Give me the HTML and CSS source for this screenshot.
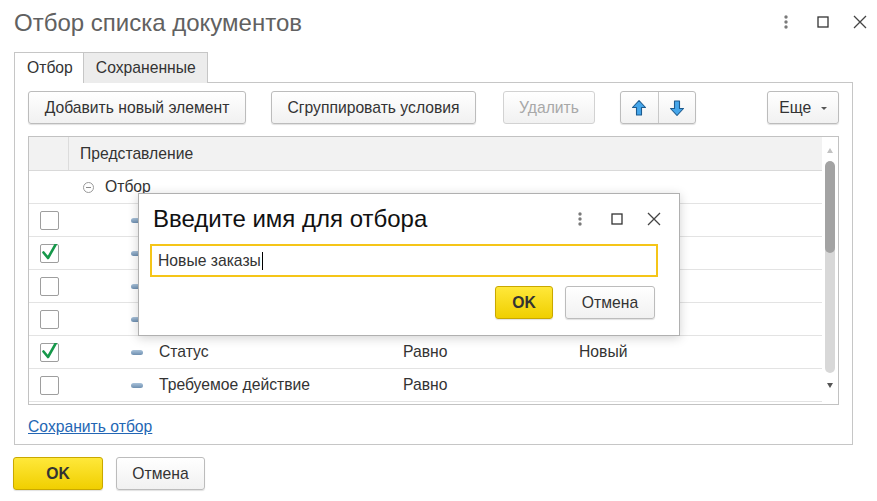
FILE: index.html
```html
<!DOCTYPE html>
<html lang="ru">
<head>
<meta charset="utf-8">
<title>Отбор списка документов</title>
<link rel="stylesheet" href="styles.css">
</head>
<body>
<div class="window">
  <div class="titlebar">
    <div class="title">Отбор списка документов</div>
    <div class="win-icons">
      <svg class="ico" width="16" height="16" viewBox="0 0 16 16"><circle cx="8" cy="3" r="1.7" fill="#7a7a7a"/><circle cx="8" cy="8" r="1.7" fill="#7a7a7a"/><circle cx="8" cy="13" r="1.7" fill="#7a7a7a"/></svg>
      <svg class="ico" width="16" height="16" viewBox="0 0 16 16"><rect x="3" y="3" width="10" height="10" fill="none" stroke="#333" stroke-width="1.3"/></svg>
      <svg class="ico" width="16" height="16" viewBox="0 0 16 16"><path d="M2 2 L14 14 M14 2 L2 14" stroke="#444" stroke-width="1.3" fill="none"/></svg>
    </div>
  </div>

  <div class="tabs">
    <div class="tab active">Отбор</div>
    <div class="tab">Сохраненные</div>
  </div>

  <div class="panel">
    <div class="toolbar">
      <button class="btn btn-add">Добавить новый элемент</button>
      <button class="btn btn-group">Сгруппировать условия</button>
      <button class="btn btn-del disabled">Удалить</button>
      <div class="btn-pair">
        <button class="btn-half">
          <svg width="16" height="18" viewBox="0 0 16 18"><path d="M8 1.5 L14.5 8.5 H10.5 V16 H5.5 V8.5 H1.5 Z" fill="#45a6ea" stroke="#1d5b8f" stroke-width="1.1" stroke-linejoin="round"/></svg>
        </button>
        <button class="btn-half">
          <svg width="16" height="18" viewBox="0 0 16 18"><path d="M8 16.5 L14.5 9.5 H10.5 V2 H5.5 V9.5 H1.5 Z" fill="#45a6ea" stroke="#1d5b8f" stroke-width="1.1" stroke-linejoin="round"/></svg>
        </button>
      </div>
      <div class="spacer"></div>
      <button class="btn btn-more">Еще <span class="caret"></span></button>
    </div>

    <div class="table">
      <div class="table-main">
        <div class="thead">
          <div class="c-check head-check"></div>
          <div class="head-name">Представление</div>
        </div>
        <div class="row group-row">
          <div class="c-check"></div>
          <div class="group-cell"><span class="minus-circle"></span><span>Отбор</span></div>
        </div>
        <div class="row">
          <div class="c-check"><span class="cb"></span></div>
          <div class="c-name"><span class="dash"></span></div>
          <div class="c-op"></div><div class="c-val"></div>
        </div>
        <div class="row">
          <div class="c-check"><span class="cb checked"><svg width="18" height="18" viewBox="0 0 18 18"><path d="M2.5 8.5 L7 14 L15.5 -1" fill="none" stroke="#16984a" stroke-width="2.6" stroke-linecap="round" stroke-linejoin="round"/></svg></span></div>
          <div class="c-name"><span class="dash"></span></div>
          <div class="c-op"></div><div class="c-val"></div>
        </div>
        <div class="row">
          <div class="c-check"><span class="cb"></span></div>
          <div class="c-name"><span class="dash"></span></div>
          <div class="c-op"></div><div class="c-val"></div>
        </div>
        <div class="row">
          <div class="c-check"><span class="cb"></span></div>
          <div class="c-name"><span class="dash"></span></div>
          <div class="c-op"></div><div class="c-val"></div>
        </div>
        <div class="row">
          <div class="c-check"><span class="cb checked"><svg width="18" height="18" viewBox="0 0 18 18"><path d="M2.5 8.5 L7 14 L15.5 -1" fill="none" stroke="#16984a" stroke-width="2.6" stroke-linecap="round" stroke-linejoin="round"/></svg></span></div>
          <div class="c-name"><span class="dash"></span>Статус</div>
          <div class="c-op">Равно</div><div class="c-val">Новый</div>
        </div>
        <div class="row">
          <div class="c-check"><span class="cb"></span></div>
          <div class="c-name"><span class="dash"></span>Требуемое действие</div>
          <div class="c-op">Равно</div><div class="c-val"></div>
        </div>
      </div>
      <div class="scrollbar">
        <span class="sb-up"></span>
        <div class="sb-track"><div class="sb-thumb"></div></div>
        <span class="sb-down"></span>
      </div>
    </div>

    <a class="save-link" href="#">Сохранить отбор</a>
  </div>

  <div class="footer">
    <button class="btn btn-ok">OK</button>
    <button class="btn btn-cancel">Отмена</button>
  </div>
</div>

<div class="dialog">
  <div class="dlg-head">
    <div class="dlg-title">Введите имя для отбора</div>
    <div class="win-icons dlg-icons">
      <svg class="ico" width="16" height="16" viewBox="0 0 16 16"><circle cx="8" cy="3" r="1.7" fill="#7a7a7a"/><circle cx="8" cy="8" r="1.7" fill="#7a7a7a"/><circle cx="8" cy="13" r="1.7" fill="#7a7a7a"/></svg>
      <svg class="ico" width="16" height="16" viewBox="0 0 16 16"><rect x="3" y="3" width="10" height="10" fill="none" stroke="#333" stroke-width="1.3"/></svg>
      <svg class="ico" width="16" height="16" viewBox="0 0 16 16"><path d="M2 2 L14 14 M14 2 L2 14" stroke="#444" stroke-width="1.3" fill="none"/></svg>
    </div>
  </div>
  <div class="dlg-input">Новые заказы<span class="caret-line"></span></div>
  <div class="dlg-buttons">
    <button class="btn btn-ok dlg-ok">OK</button>
    <button class="btn btn-cancel dlg-cancel">Отмена</button>
  </div>
</div>
</body>
</html>
```

FILE: styles.css
```css
* { box-sizing: border-box; }
html, body { margin: 0; padding: 0; background: #fff; }
body {
  font-family: "Liberation Sans", Arial, sans-serif;
  font-size: 15.7px;
  color: #333;
  width: 877px;
  height: 501px;
  overflow: hidden;
  position: relative;
}
button { font-family: inherit; font-size: 15.7px; }

.window { padding: 0 24px 0 14px; }

.titlebar {
  height: 52px;
  display: flex;
  align-items: flex-start;
  padding-top: 9px;
}
.title {
  flex: 1;
  font-size: 24px;
  color: #616161;
  line-height: 28px;
}
.win-icons {
  display: flex;
  gap: 21px;
  padding-top: 5px;
  margin-right: -15px;
}
.ico { display: block; }

.tabs {
  display: flex;
  height: 31px;
  position: relative;
  z-index: 1;
}
.tab {
  height: 31px;
  padding: 0 11px 0 12px;
  line-height: 29px;
  border: 1px solid #c6c6c6;
  border-bottom: none;
  background: #ececec;
  color: #333;
}
.tab.active {
  background: #fff;
  padding: 0 10px 0 12px;
  border-right: none;
  height: 31px;
}

.panel {
  border: 1px solid #c6c6c6;
  margin-top: -1px;
  padding: 8px 13px 8px 13px;
  height: 363px;
  display: flex;
  flex-direction: column;
}

.toolbar {
  display: flex;
  height: 33px;
  align-items: stretch;
}
.btn {
  height: 33px;
  border: 1px solid #bcbcbc;
  border-radius: 3px;
  background: linear-gradient(#ffffff, #f1f1f1);
  box-shadow: 0 1px 1px rgba(0,0,0,0.12);
  color: #333;
  padding: 0 10px;
  cursor: default;
}
.btn-add { width: 218px; }
.btn-group { width: 205px; margin-left: 25px; }
.btn-del { width: 92px; margin-left: 27px; }
.btn.disabled { color: #a8a8a8; border-color: #d2d2d2; box-shadow: none; }
.btn-pair {
  display: flex;
  margin-left: 25px;
  border: 1px solid #bcbcbc;
  border-radius: 3px;
  background: linear-gradient(#ffffff, #f1f1f1);
  box-shadow: 0 1px 1px rgba(0,0,0,0.12);
  width: 76px;
}
.btn-half {
  flex: 1;
  border: none;
  background: transparent;
  display: flex;
  align-items: center;
  justify-content: center;
  padding: 0;
}
.btn-half + .btn-half { border-left: 1px solid #c8c8c8; }
.spacer { flex: 1; }
.btn-more { width: 72px; padding: 0 8px; text-align: center; }
.caret {
  display: inline-block;
  width: 0; height: 0;
  border-left: 3px solid transparent;
  border-right: 3px solid transparent;
  border-top: 3px solid #555;
  vertical-align: middle;
  margin-left: 5px;
}

.table {
  margin-top: 12px;
  border: 1px solid #c2c2c2;
  height: 269px;
  display: flex;
}
.table-main { flex: 1; }
.thead {
  display: flex;
  height: 34px;
  background: #f2f2f2;
  border-bottom: 1px solid #d9d9d9;
}
.head-check { border-right: 1px solid #dcdcdc; }
.head-name { padding-left: 11px; line-height: 33px; }
.row {
  display: flex;
  height: 33px;
  border-bottom: 1px solid #e3e3e3;
  align-items: center;
}
.c-check {
  width: 40px;
  flex: none;
  display: flex;
  align-items: center;
  justify-content: center;
  align-self: stretch;
}
.c-name {
  width: 334px;
  flex: none;
  padding-left: 62px;
  display: flex;
  align-items: center;
}
.c-op { width: 176px; flex: none; }
.c-val { flex: 1; }
.group-cell {
  padding-left: 14px;
  display: flex;
  align-items: center;
}
.minus-circle {
  width: 11px; height: 11px;
  border: 1px solid #9a9a9a;
  border-radius: 50%;
  position: relative;
  margin-right: 11px;
}
.minus-circle::after {
  content: "";
  position: absolute;
  left: 2px; right: 2px; top: 4px;
  height: 1px;
  background: #8a8a8a;
}
.cb {
  width: 19px; height: 19px;
  border: 1px solid #9e9e9e;
  border-radius: 2px;
  background: #fff;
  position: relative;
}
.cb svg { position: absolute; left: 0; top: -1px; }
.dash {
  width: 12px; height: 5px;
  border-radius: 3px;
  background: linear-gradient(#a9c2da, #6e8fb0);
  margin-right: 16px;
  flex: none;
}

.scrollbar {
  width: 16px;
  flex: none;
  position: relative;
  display: flex;
  flex-direction: column;
  align-items: center;
}
.sb-up {
  margin-top: 11px;
  width: 0; height: 0;
  border-left: 3px solid transparent;
  border-right: 3px solid transparent;
  border-bottom: 5px solid #c2c2c2;
}
.sb-track {
  margin-top: 8px;
  width: 10px;
  height: 212px;
  border-radius: 5px;
  background: #d8d8d8;
  overflow: hidden;
}
.sb-thumb {
  height: 92px;
  background: #a3a3a3;
  border-radius: 5px;
}
.sb-down {
  margin-top: 10px;
  width: 0; height: 0;
  border-left: 3px solid transparent;
  border-right: 3px solid transparent;
  border-top: 5px solid #555;
}

.save-link {
  margin-top: 13px;
  color: #2366b4;
  text-decoration: underline;
  line-height: 18px;
  align-self: flex-start;
}

.footer {
  display: flex;
  gap: 13px;
  margin-top: 12px;
  margin-left: -1px;
}
.btn-ok {
  background: linear-gradient(#ffe83a, #f0cf00);
  border-color: #c9a800;
  font-weight: bold;
  color: #333;
  width: 90px;
}
.btn-cancel { width: 89px; }

.dialog {
  position: absolute;
  left: 138px;
  top: 193px;
  width: 542px;
  height: 143px;
  background: #fff;
  border: 1px solid #b0b0b0;
  box-shadow: 0 2px 10px rgba(0,0,0,0.18);
  padding: 0 21px 0 11px;
  display: flex;
  flex-direction: column;
}
.dlg-head {
  display: flex;
  height: 50px;
  align-items: center;
}
.dlg-title {
  flex: 1;
  font-size: 24px;
  color: #111;
  padding-left: 3px;
  padding-bottom: 1px;
}
.dlg-icons { padding-top: 0; margin-right: -4px; }
.dlg-input {
  height: 33px;
  border: 2px solid #f5c518;
  padding-left: 6px;
  line-height: 29px;
  color: #333;
  display: flex;
  align-items: center;
}
.caret-line {
  display: inline-block;
  width: 1px;
  height: 18px;
  background: #000;
  margin-left: 1px;
}
.dlg-buttons {
  display: flex;
  justify-content: flex-end;
  gap: 12px;
  margin-top: 9px;
  padding-right: 3px;
}
.dlg-ok { width: 58px; padding: 0; }
.dlg-cancel { width: 90px; padding: 0; }
```
